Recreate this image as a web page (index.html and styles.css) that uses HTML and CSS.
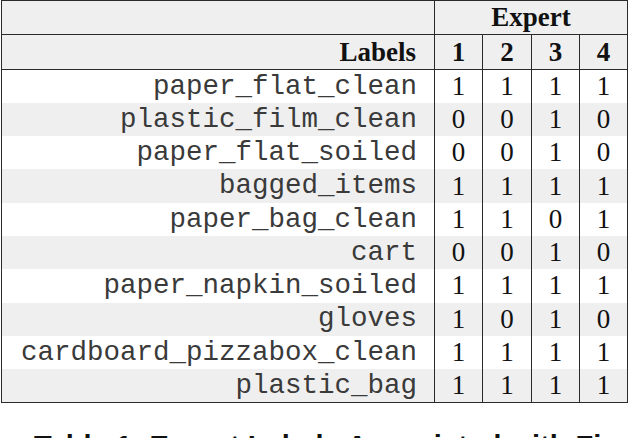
FILE: index.html
```html
<!DOCTYPE html>
<html>
<head>
<meta charset="utf-8">
<link rel="stylesheet" href="styles.css">
</head>
<body>
<div class="page">
<table class="labels-table">
  <colgroup>
    <col class="c-label">
    <col class="c-exp">
    <col class="c-exp2">
    <col class="c-exp">
    <col class="c-exp">
  </colgroup>
  <thead>
    <tr class="h1">
      <th class="label-head"></th>
      <th colspan="4" class="expert">Expert</th>
    </tr>
    <tr class="h2">
      <th class="label-head">Labels</th>
      <th>1</th><th>2</th><th>3</th><th>4</th>
    </tr>
  </thead>
  <tbody>
    <tr><td class="lab">paper_flat_clean</td><td>1</td><td>1</td><td>1</td><td>1</td></tr>
    <tr class="alt"><td class="lab">plastic_film_clean</td><td>0</td><td>0</td><td>1</td><td>0</td></tr>
    <tr><td class="lab">paper_flat_soiled</td><td>0</td><td>0</td><td>1</td><td>0</td></tr>
    <tr class="alt"><td class="lab">bagged_items</td><td>1</td><td>1</td><td>1</td><td>1</td></tr>
    <tr><td class="lab">paper_bag_clean</td><td>1</td><td>1</td><td>0</td><td>1</td></tr>
    <tr class="alt"><td class="lab">cart</td><td>0</td><td>0</td><td>1</td><td>0</td></tr>
    <tr><td class="lab">paper_napkin_soiled</td><td>1</td><td>1</td><td>1</td><td>1</td></tr>
    <tr class="alt"><td class="lab">gloves</td><td>1</td><td>0</td><td>1</td><td>0</td></tr>
    <tr><td class="lab">cardboard_pizzabox_clean</td><td>1</td><td>1</td><td>1</td><td>1</td></tr>
    <tr class="alt"><td class="lab">plastic_bag</td><td>1</td><td>1</td><td>1</td><td>1</td></tr>
  </tbody>
</table>
<p class="caption">Table 1: Expert Labels Associated with Figure 3</p>
</div>
</body>
</html>
```

FILE: styles.css
```css
html, body {
  margin: 0;
  padding: 0;
  background: #ffffff;
  overflow: hidden;
}
.page {
  width: 628px;
  height: 438px;
  overflow: hidden;
  padding-left: 1px;
  box-sizing: border-box;
}
.labels-table {
  border-collapse: collapse;
  table-layout: fixed;
  width: 626px;
  font-family: "Liberation Serif", "Times New Roman", serif;
  font-size: 27px;
  color: #111;
  border: 1px solid #2a2a2a;
}
.c-label { width: 433px; }
.c-exp { width: 48px; }
.c-exp2 { width: 49px; }
.labels-table th,
.labels-table td {
  padding: 0;
  line-height: 1;
  text-align: center;
  border-left: 1px solid #2a2a2a;
  border-right: 1px solid #2a2a2a;
}
.labels-table thead th {
  background: #efefef;
  font-weight: bold;
  border-bottom: 1px solid #2a2a2a;
}
.h1 { height: 34px; }
.h2 { height: 35px; }
.labels-table tbody tr { height: 33.3px; }
.labels-table tbody tr.alt td { background: #efefef; }
.labels-table th.label-head {
  text-align: right;
  padding-right: 18px;
}
.labels-table td.lab {
  text-align: right;
  padding-right: 17px;
  font-family: "Liberation Mono", "Courier New", monospace;
  font-size: 27.5px;
  color: #3a3a3a;
}
.caption {
  margin: 27px 0 0 0;
  padding-left: 33px;
  white-space: nowrap;
  font-family: "Liberation Sans", Arial, sans-serif;
  font-weight: bold;
  font-size: 29px;
  line-height: 33px;
  color: #111;
}
```
